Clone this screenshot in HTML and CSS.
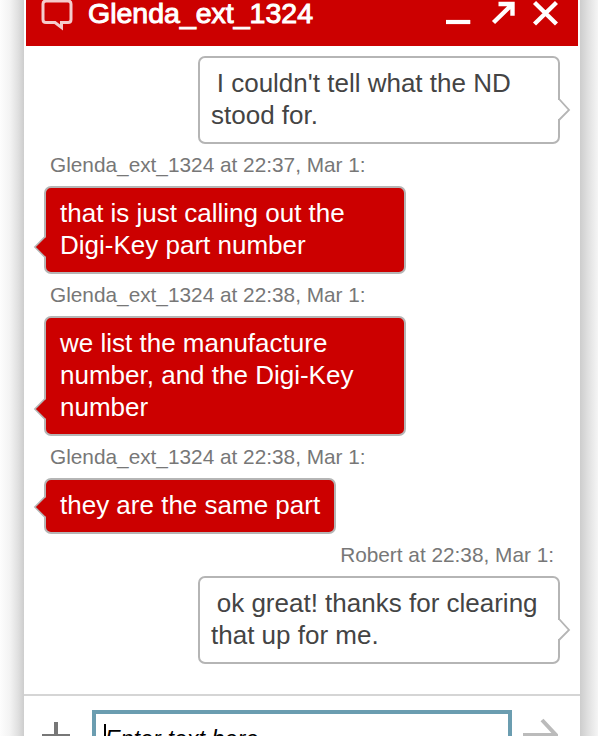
FILE: index.html
```html
<!DOCTYPE html>
<html lang="en">
<head>
<meta charset="utf-8">
<title>Chat</title>
<link rel="stylesheet" href="styles.css">
</head>
<body>
<main class="chat">
  <header class="header">
    <svg class="chat-icon" width="32" height="32" viewBox="0 0 32 32"><path d="M5 1H27Q30 1 30 4V19.500Q30 22.500 27 22.500H20.500V27.500L14 22.500H5Q2 22.500 2 19.500V4Q2 1 5 1Z"/></svg>
    <h1 class="title">Glenda_ext_1324</h1>
    <svg class="controls" width="116" height="32" viewBox="0 0 116 32"><path class="minimise" d="M4 22H28.300"/><path d="M51.500 22.500L69.500 5M56.500 4H70.500V15.800"/><path d="M92.500 2.500L114.500 24M114.500 2.500L92.500 24"/></svg>
  </header>
  <section class="messages">
    <div class="bubble visitor">&nbsp;I couldn't tell what the ND stood for.<svg class="tail" width="14" height="22" viewBox="0 0 14 22"><path class="join" d="M0 1H3L12 11L3 20H0Z"/><path d="M2 0L12 11L2 21"/></svg></div>
    <p class="meta">Glenda_ext_1324 at 22:37, Mar 1:</p>
    <div class="bubble agent">that is just calling out the Digi-Key part number<svg class="tail" width="14" height="22" viewBox="0 0 14 22"><path d="M12 1L2 11L12 21"/><path class="join" d="M14 1.500H12.500L3 11L12.500 20.500H14Z"/></svg></div>
    <p class="meta">Glenda_ext_1324 at 22:38, Mar 1:</p>
    <div class="bubble agent">we list the manufacture number, and the Digi-Key number<svg class="tail" width="14" height="22" viewBox="0 0 14 22"><path d="M12 1L2 11L12 21"/><path class="join" d="M14 1.500H12.500L3 11L12.500 20.500H14Z"/></svg></div>
    <p class="meta">Glenda_ext_1324 at 22:38, Mar 1:</p>
    <div class="bubble agent short">they are the same part<svg class="tail" width="14" height="22" viewBox="0 0 14 22"><path d="M12 1L2 11L12 21"/><path class="join" d="M14 1.500H12.500L3 11L12.500 20.500H14Z"/></svg></div>
    <p class="meta own">Robert at 22:38, Mar 1:</p>
    <div class="bubble visitor">&nbsp;ok great! thanks for clearing that up for me.<svg class="tail" width="14" height="22" viewBox="0 0 14 22"><path class="join" d="M0 1H3L12 11L3 20H0Z"/><path d="M2 0L12 11L2 21"/></svg></div>
  </section>
  <footer class="composer">
    <svg class="add" width="30" height="30" viewBox="0 0 30 30"><path d="M15 1V29M1 15H29"/></svg>
    <div class="input"><span class="caret"></span><span class="placeholder">Enter text here...</span></div>
    <svg class="send" width="36" height="34" viewBox="0 0 36 34"><path d="M1 17H34M20 2L34 17L20 32"/></svg>
  </footer>
</main>
</body>
</html>
```
FILE: styles.css
```css
* { box-sizing: border-box; }
body {
  margin: 0;
  height: 736px;
  overflow: hidden;
  background: linear-gradient(to right, #fdfdfd 0, #f3f3f3 10px, #e0e0e0 18px, #cdcdcd 24px, #cdcdcd 580px, #e0e0e0 588px, #f5f5f5 598px);
  font-family: "Liberation Sans", Arial, sans-serif;
}
.chat {
  width: 556px;
  height: 736px;
  margin-left: 24px;
  background: #fff;
}
.header {
  display: flex;
  height: 46px;
  margin: 0 2px;
  padding-left: 15px;
  background: #c00;
}
.header svg { fill: none; stroke: #fff; flex: none; }
.chat-icon { stroke-width: 3; opacity: .8; }
.title {
  margin: -3px 0 0 15px;
  color: #fff;
  font-size: 28.500px;
  font-weight: 400;
  line-height: 32px;
  -webkit-text-stroke: 1px #fff;
}
.controls { margin-left: auto; margin-right: 20px; stroke-width: 4.400; }
.minimise { stroke-width: 4.200; }
.messages { height: 648px; padding: 10px 20px 0; }
.bubble {
  position: relative;
  width: 362px;
  padding: 9px 11px 11px 14px;
  border: 2px solid #b5b5b5;
  border-radius: 7px;
  font-size: 26px;
  line-height: 32px;
}
.visitor { margin-left: auto; padding-left: 11px; color: #444; background: #fff; text-indent: -1.500px; }
.agent { color: #fff; background: #c00; }
.short { width: 292px; }
.tail { position: absolute; bottom: 21px; stroke: #b5b5b5; stroke-width: 1.800; }
.tail .join { stroke: none; }
.visitor .tail { right: -13px; fill: #fff; }
.agent .tail { left: -13px; bottom: 14px; fill: #c00; }
.meta {
  height: 42px;
  margin: 0;
  padding: 0 6px;
  color: #777;
  font-size: 20.800px;
  line-height: 42px;
}
.own { text-align: right; }
.composer {
  display: flex;
  height: 42px;
  padding: 14px 20px 0 17px;
  border-top: 2px solid #d5d5d5;
  overflow: hidden;
}
.composer svg { fill: none; flex: none; }
.add { margin-top: 11px; stroke: #777; stroke-width: 4; }
.input {
  display: flex;
  width: 420px;
  height: 64px;
  margin-left: 21px;
  padding: 10px 8px;
  border: 4px solid #6b9db0;
  background: #fff;
}
.caret { width: 2px; height: 30px; background: #000; }
.placeholder {
  margin-left: -1px;
  font-size: 23.400px;
  font-style: italic;
  line-height: 30px;
}
.send { margin: 8px 0 0 10px; stroke: #bbb; stroke-width: 4; }
```
